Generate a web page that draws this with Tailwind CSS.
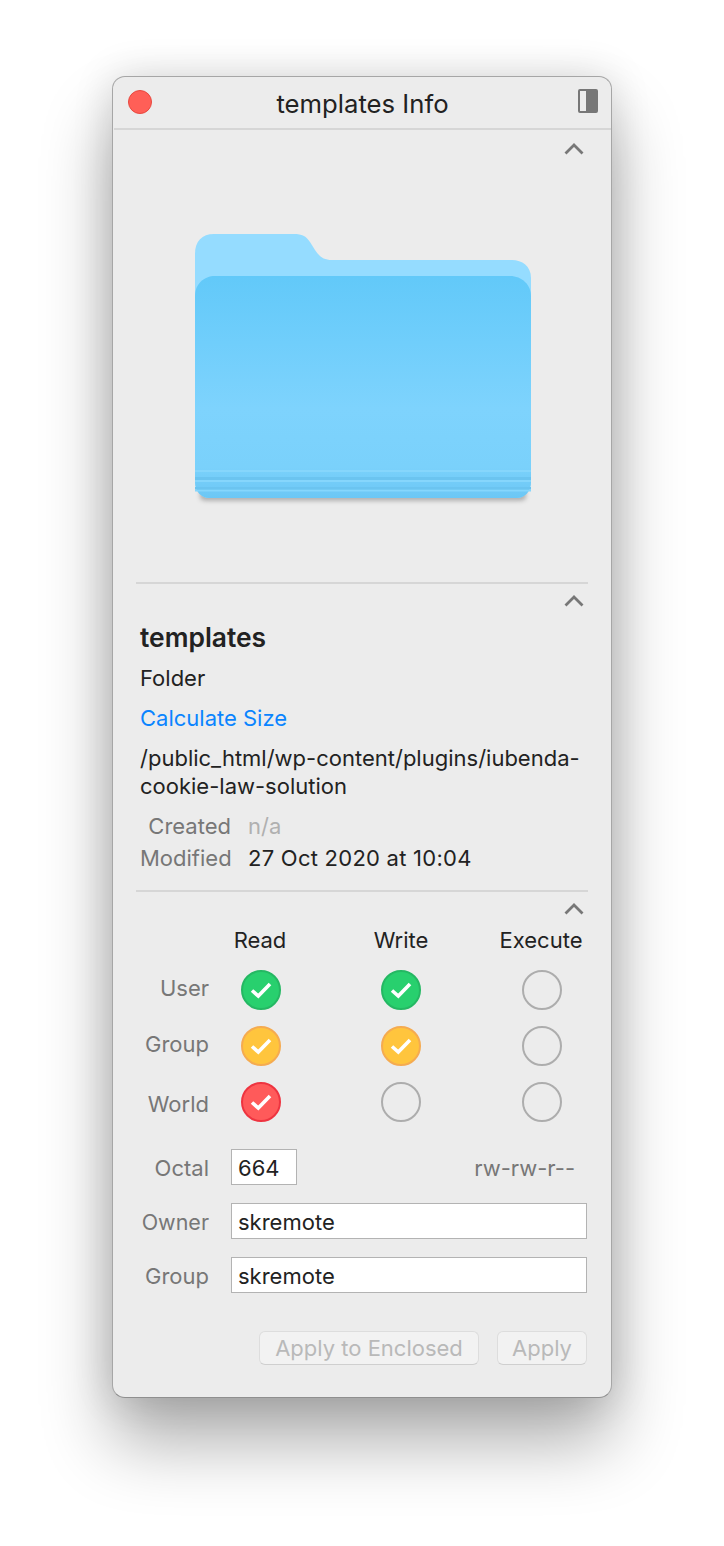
<!DOCTYPE html>
<html lang="en">

<head>
	<meta charset="UTF-8" />
	<meta name="viewport" content="width=device-width, initial-scale=1.0" />
	<title>templates Info</title>
	<script src="https://cdn.jsdelivr.net/npm/@tailwindcss/browser@4"></script>
</head>

<body class="bg-white w-[724px] h-[1546px] overflow-hidden font-['Inter',sans-serif] text-[22px] text-[#222222]">
	<div class="w-[500px] h-[1322px] ml-[112px] mt-[76px] pt-px relative bg-[#ececec] rounded-[13px] border border-[#a6a6a6] border-b-[#8f8f8f] shadow-[0_44px_70px_rgba(0,0,0,0.32),0_0_40px_rgba(0,0,0,0.14)] flex flex-col">

		<!-- title bar -->
		<div class="h-[52px] ml-px flex items-center justify-between border-b-2 border-[#d6d6d6] pl-[14px] pr-[13px] shrink-0">
			<div class="w-6 h-6 rounded-full bg-[#ff5f57] border border-[#e8483f] -mt-[2px]"></div>
			<div class="text-[25.7px] leading-none pt-[2px] mr-[5px]">templates Info</div>
			<div class="w-5 h-6 rounded-[2px] border-2 border-[#777777] flex justify-end -mt-[4px]">
				<div class="w-[10px] h-full bg-[#777777]"></div>
			</div>
		</div>

		<!-- preview -->
		<div class="h-[454px] mx-[23px] border-b-2 border-[#d6d6d6] relative shrink-0">
			<svg class="absolute right-[4px] top-[12px]" width="20" height="14" viewBox="0 0 20 14" fill="none">
				<path d="M1.5 11.5 10 3l8.5 8.5" stroke="#777777" stroke-width="2.8" />
			</svg>
			<svg class="absolute left-[58px] top-[100px]" width="340" height="276" viewBox="0 0 340 276">
				<defs>
					<linearGradient id="front" x1="0" y1="0" x2="0" y2="1">
						<stop offset="0" stop-color="#62c9f9" />
						<stop offset="0.6" stop-color="#7ed3fd" />
						<stop offset="0.86" stop-color="#7ad1fb" />
						<stop offset="1" stop-color="#6cc7f5" />
					</linearGradient>
					<filter id="drop" x="-5%" y="-5%" width="110%" height="112%" color-interpolation-filters="sRGB">
						<feGaussianBlur stdDeviation="2" />
					</filter>
				</defs>
				<path d="M6 60h326v208c0 2-4 3-8 3H14c-4 0-8-1-8-3z" fill="#777777" opacity="0.5" filter="url(#drop)" />
				<path d="M1 24C1 11 8 4 20 4h80c8 0 12 2 16 8l5 8c4 6 8 10 17 10h180c10 0 19 6 19 18v204c0 8-6 16-14 16H15c-8 0-14-8-14-16z" fill="#95dcff" />
				<path d="M1 66c0-12 9-20 20-20h295c12 0 21 9 21 20v186c0 9-6 16-14 16H15c-8 0-14-7-14-16z" fill="url(#front)" />
				<path d="M1 240h336v2H1zM1 250h336v2H1zM1 259.500h336v2H1z" fill="#86d6fc" />
				<path d="M1 247h336v3H1zM1 257h336v2.500H1z" fill="#6bc4f0" />
			</svg>
		</div>

		<!-- general -->
		<div class="h-[308px] mx-[23px] border-b-2 border-[#d6d6d6] relative shrink-0 pl-[4px] pt-[38px]">
			<svg class="absolute right-[4px] top-[10px]" width="20" height="14" viewBox="0 0 20 14" fill="none">
				<path d="M1.500 11.500 10 3l8.500 8.500" stroke="#777777" stroke-width="2.8" />
			</svg>
			<div class="text-[26.4px] font-semibold leading-[30px]">templates</div>
			<div class="mt-[12px] leading-[28px]">Folder</div>
			<div class="mt-[12px] leading-[28px] text-[#0a84ff]">Calculate Size</div>
			<div class="mt-[12px] leading-[28px] w-[450px]">/public_html/wp-content/plugins/iubenda-cookie-law-solution</div>
			<div class="mt-[12px] grid grid-cols-[91px_1fr] gap-x-[17px] gap-y-[4px] leading-[28px]">
				<div class="text-right text-[#777777]">Created</div>
				<div class="text-[#b0b0b0]">n/a</div>
				<div class="text-right text-[#777777]">Modified</div>
				<div class="tracking-[0.25px]">27 Oct 2020 at 10:04</div>
			</div>
		</div>

		<!-- permissions -->
		<div class="mx-[23px] relative grow">
			<svg class="absolute right-[4px] top-[10px]" width="20" height="14" viewBox="0 0 20 14" fill="none">
				<path d="M1.500 11.500 10 3l8.500 8.500" stroke="#777777" stroke-width="2.8" />
			</svg>
			<div class="grid grid-cols-[73px_102px_180px_100px] pt-[34px] items-center justify-items-center">
				<div></div>
				<div class="h-[28px] leading-[28px]">Read</div>
				<div class="h-[28px] leading-[28px]">Write</div>
				<div class="h-[28px] leading-[28px]">Execute</div>
			</div>
			<div class="grid grid-cols-[73px_104px_176px_106px] grid-rows-[56px_56px_56px] mt-[8px] items-center justify-items-center">
				<div class="justify-self-end text-[#777777] -mt-[4px]">User</div>
				<div class="w-10 h-10 rounded-full bg-[#28d06e] border-2 border-[#25b863] flex items-center justify-center">
					<svg width="24" height="20" viewBox="0 0 24 20" fill="none"><path d="M3 10.500 9.300 16 21 4" stroke="#ffffff" stroke-width="3.6" /></svg>
				</div>
				<div class="w-10 h-10 rounded-full bg-[#28d06e] border-2 border-[#25b863] flex items-center justify-center">
					<svg width="24" height="20" viewBox="0 0 24 20" fill="none"><path d="M3 10.500 9.300 16 21 4" stroke="#ffffff" stroke-width="3.6" /></svg>
				</div>
				<div class="w-10 h-10 rounded-full border-2 border-[#adadad]"></div>

				<div class="justify-self-end text-[#777777] -mt-[4px]">Group</div>
				<div class="w-10 h-10 rounded-full bg-[#ffc53d] border-2 border-[#f5ab50] flex items-center justify-center">
					<svg width="24" height="20" viewBox="0 0 24 20" fill="none"><path d="M3 10.500 9.300 16 21 4" stroke="#ffffff" stroke-width="3.6" /></svg>
				</div>
				<div class="w-10 h-10 rounded-full bg-[#ffc53d] border-2 border-[#f5ab50] flex items-center justify-center">
					<svg width="24" height="20" viewBox="0 0 24 20" fill="none"><path d="M3 10.500 9.300 16 21 4" stroke="#ffffff" stroke-width="3.6" /></svg>
				</div>
				<div class="w-10 h-10 rounded-full border-2 border-[#adadad]"></div>

				<div class="justify-self-end text-[#777777] mt-[4px]">World</div>
				<div class="w-10 h-10 rounded-full bg-[#ff5a5a] border-2 border-[#ee3440] flex items-center justify-center">
					<svg width="24" height="20" viewBox="0 0 24 20" fill="none"><path d="M3 10.500 9.300 16 21 4" stroke="#ffffff" stroke-width="3.6" /></svg>
				</div>
				<div class="w-10 h-10 rounded-full border-2 border-[#adadad]"></div>
				<div class="w-10 h-10 rounded-full border-2 border-[#adadad]"></div>
			</div>

			<div class="mt-[19px] flex items-center h-9">
				<div class="w-[73px] text-right text-[#777777] pt-[2px]">Octal</div>
				<div class="ml-[22px] w-[66px] h-9 bg-white border border-[#b3b3b3] pl-[6px] leading-[36px]">664</div>
				<div class="ml-auto mr-[13px] text-[#777777] pt-[2px]">rw-rw-r--</div>
			</div>
			<div class="mt-[18px] flex items-center h-9">
				<div class="w-[73px] text-right text-[#777777] pt-[2px] text-[21.500px]">Owner</div>
				<div class="ml-[22px] w-[356px] h-9 bg-white border border-[#b3b3b3] pl-[6px] leading-[36px]">skremote</div>
			</div>
			<div class="mt-[18px] flex items-center h-9">
				<div class="w-[73px] text-right text-[#777777] pt-[2px]">Group</div>
				<div class="ml-[22px] w-[356px] h-9 bg-white border border-[#b3b3b3] pl-[6px] leading-[36px]">skremote</div>
			</div>

			<div class="mt-[38px] flex justify-end gap-[18px] w-[451px]">
				<div class="w-[220px] h-[34px] rounded-[6px] bg-[#f2f2f2] border border-[#dddddd] border-b-[#cfcfcf] text-[#b9b9b9] text-center leading-[32px]">Apply to Enclosed</div>
				<div class="w-[90px] h-[34px] rounded-[6px] bg-[#f2f2f2] border border-[#dddddd] border-b-[#cfcfcf] text-[#b9b9b9] text-center leading-[32px]">Apply</div>
			</div>
		</div>
	</div>
</body>

</html>
